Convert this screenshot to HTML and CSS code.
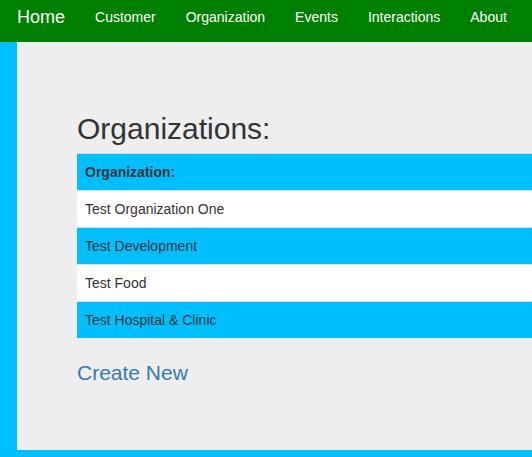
FILE: index.html
```html
<!DOCTYPE html>
<html lang="en">
<head>
<meta charset="utf-8">
<title>Organizations</title>
<link rel="stylesheet" href="styles.css">
</head>
<body>
<nav class="navbar">
  <a class="brand" href="#">Home</a>
  <a class="nav-link" href="#">Customer</a>
  <a class="nav-link" href="#">Organization</a>
  <a class="nav-link" href="#">Events</a>
  <a class="nav-link" href="#">Interactions</a>
  <a class="nav-link" href="#">About</a>
</nav>
<main class="panel">
  <h2 class="title">Organizations:</h2>
  <table class="org-table">
    <thead>
      <tr class="row-blue"><th>Organization:</th></tr>
    </thead>
    <tbody>
      <tr class="row-white"><td>Test Organization One</td></tr>
      <tr class="row-blue"><td>Test Development</td></tr>
      <tr class="row-white"><td>Test Food</td></tr>
      <tr class="row-blue"><td>Test Hospital &amp; Clinic</td></tr>
    </tbody>
  </table>
  <a class="create-link" href="#">Create New</a>
</main>
</body>
</html>
```

FILE: styles.css
```css
html, body {
  margin: 0;
  padding: 0;
}
body {
  background: #00bfff;
  font-family: "Liberation Sans", Arial, sans-serif;
  font-size: 14px;
  color: #333;
  overflow: hidden;
  height: 457px;
}
.navbar {
  display: flex;
  align-items: flex-start;
  height: 42px;
  background: #008000;
}
.navbar a {
  color: #fff;
  text-decoration: none;
}
.brand {
  font-size: 18px;
  line-height: 20px;
  padding: 7px 15px 0 17px;
}
.nav-link {
  font-size: 14px;
  line-height: 20px;
  padding: 7px 15px 0 15px;
}
.panel {
  display: block;
  margin-left: 17px;
  height: 408px;
  box-sizing: border-box;
  background: #eeeeee;
  padding: 70px 0 0 60px;
}
.title {
  margin: 0 0 8px 0;
  font-size: 30px;
  font-weight: 500;
  line-height: 33px;
  color: #333;
}
.org-table {
  width: 100%;
  border-collapse: collapse;
  border-spacing: 0;
}
.org-table th,
.org-table td {
  text-align: left;
  padding: 8px;
  line-height: 20px;
  border-top: 1px solid #dddddd;
  font-size: 14px;
}
.org-table th {
  font-weight: bold;
}
.row-blue {
  background: #00bfff;
}
.row-white {
  background: #ffffff;
}
.create-link {
  display: inline-block;
  margin-top: 23px;
  font-size: 21px;
  line-height: 24px;
  color: #337ab7;
  text-decoration: none;
}
```
